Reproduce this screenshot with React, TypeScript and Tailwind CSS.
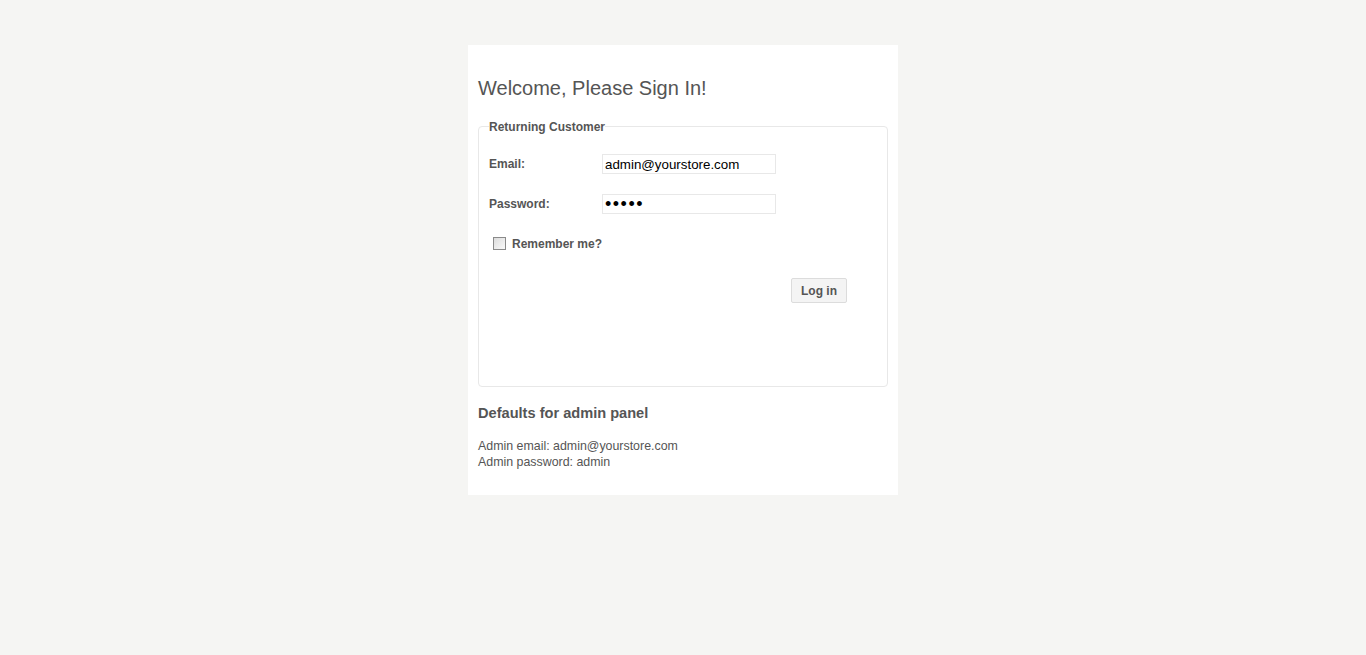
export default function App() {
  return (
    <div className="min-h-[655px] w-full bg-[#f5f5f3] pt-[45px] font-['Liberation_Sans',Arial,sans-serif] text-[#555]">
      <div className="mx-auto flex h-[450px] w-[430px] flex-col bg-white px-[10px]">
        <h1 className="mt-[31px] text-[20px] leading-[24px] text-[#555]">
          Welcome, Please Sign In!
        </h1>

        {/* Returning customer */}
        <fieldset className="mt-[18px] h-[269px] rounded-[4px] border border-[#e8e8e8] px-[10px]">
          <legend className="pt-[2px] text-[12px] font-bold leading-[14px]">
            Returning Customer
          </legend>
          <div className="mt-[20px] flex flex-col">
            <div className="flex h-[20px] items-center">
              <label className="w-[113px] text-[12px] font-bold">Email:</label>
              <input
                type="text"
                defaultValue="admin@yourstore.com"
                className="h-[20px] w-[174px] border border-[#e8e8e8] px-[2px] text-[13.333px] text-black outline-none"
              />
            </div>
            <div className="mt-[20px] flex h-[20px] items-center">
              <label className="w-[113px] text-[12px] font-bold">Password:</label>
              <input
                type="password"
                defaultValue="admin"
                className="h-[20px] w-[174px] border border-[#e8e8e8] px-[2px] text-[18px] tracking-[1.5px] text-black outline-none"
              />
            </div>
            <div className="mt-[23px] flex h-[13px] items-center">
              <span className="ml-[4px] h-[13px] w-[13px] border border-[#8a8a8a] bg-gradient-to-br from-[#dcdcdc] to-[#fafafa]" />
              <span className="ml-[6px] text-[12px] font-bold">Remember me?</span>
            </div>
            <div className="mt-[28px] flex">
              <button
                type="button"
                className="ml-[302px] h-[25px] w-[56px] rounded-[2px] border border-[#dcdcdc] bg-[#f4f4f4] text-[12px] font-bold text-[#555]"
              >
                Log in
              </button>
            </div>
          </div>
        </fieldset>

        <h2 className="mt-[17px] text-[14.6px] font-bold leading-[18px]">
          Defaults for admin panel
        </h2>
        <div className="mt-[16px] text-[12.4px] leading-[16px]">
          <div>Admin email: admin@yourstore.com</div>
          <div>Admin password: admin</div>
        </div>
      </div>
    </div>
  );
}
